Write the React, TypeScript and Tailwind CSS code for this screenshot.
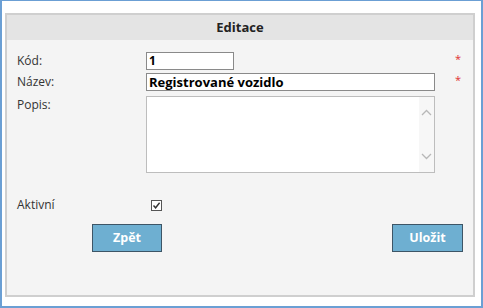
import React from "react";

export default function App() {
  const font = { fontFamily: '"Open Sans", "DejaVu Sans", sans-serif' };
  return (
    <div
      className="w-[483px] h-[308px] bg-white border-l-2 border-r-2 border-t border-b-2 border-[#6b9fd4] pt-[12px] pl-[3px] pr-[6px] pb-[9px] text-[#333]"
      style={font}
    >
      <div className="h-full border-2 border-[#cfcfcf] bg-[#f4f4f4] flex flex-col">
        <div className="h-[25px] bg-[#e4e4e4] flex items-center justify-center text-[13px] font-bold text-[#222]">
          Editace
        </div>
        <div className="flex flex-col pl-[10px] pt-[12px]">
          <div className="flex items-center h-[18px]">
            <div className="w-[129px] text-[12px]">Kód:</div>
            <div className="w-[88px] h-[18px] bg-white border border-[#8a8a8a] text-[12px] font-bold leading-[16px] px-[2px] text-black">1</div>
            <div className="ml-[221px] self-start leading-[14px] text-[#e03030] text-[11px]">*</div>
          </div>
          <div className="flex items-center h-[18px] mt-[3px]">
            <div className="w-[129px] text-[12px]">Název:</div>
            <div className="w-[289px] h-[18px] bg-white border border-[#8a8a8a] text-[13px] font-bold leading-[16px] px-[2px] text-black">
              Registrované vozidlo
            </div>
            <div className="ml-[20px] self-start leading-[14px] text-[#e03030] text-[11px]">*</div>
          </div>
          <div className="flex items-start mt-[5px]">
            <div className="w-[129px] text-[12px] leading-[16px] pt-[1px]">Popis:</div>
            <div className="w-[289px] h-[77px] bg-white border border-[#bdbdbd] flex justify-end">
              <div className="w-[15px] h-full bg-[#f7f7f7] flex flex-col justify-between items-center py-[12px]">
                <svg width="11" height="7" viewBox="0 0 11 7">
                  <path d="M1 6 L5.5 1.5 L10 6" stroke="#b8b8b8" strokeWidth="1.3" fill="none" />
                </svg>
                <svg width="11" height="7" viewBox="0 0 11 7">
                  <path d="M1 1 L5.5 5.5 L10 1" stroke="#b8b8b8" strokeWidth="1.3" fill="none" />
                </svg>
              </div>
            </div>
          </div>
          <div className="flex items-center mt-[26px] h-[12px]">
            <div className="w-[134px] text-[12px]">Aktivní</div>
            <div className="w-[11px] h-[11px] border border-[#555] bg-white flex items-center justify-center">
              <svg width="9" height="9" viewBox="0 0 9 9">
                <path d="M1.5 4.5 L3.6 6.8 L7.6 1.8" stroke="#333" strokeWidth="1.4" fill="none" />
              </svg>
            </div>
          </div>
          <div className="flex mt-[13px]">
            <button className="ml-[75px] w-[70px] h-[28px] bg-[#6eafd1] border border-[#3d5566] text-white font-bold text-[12.5px]">
              Zpět
            </button>
            <button className="ml-[230px] w-[71px] h-[28px] bg-[#6eafd1] border border-[#3d5566] text-white font-bold text-[12.5px]">
              Uložit
            </button>
          </div>
        </div>
      </div>
    </div>
  );
}
